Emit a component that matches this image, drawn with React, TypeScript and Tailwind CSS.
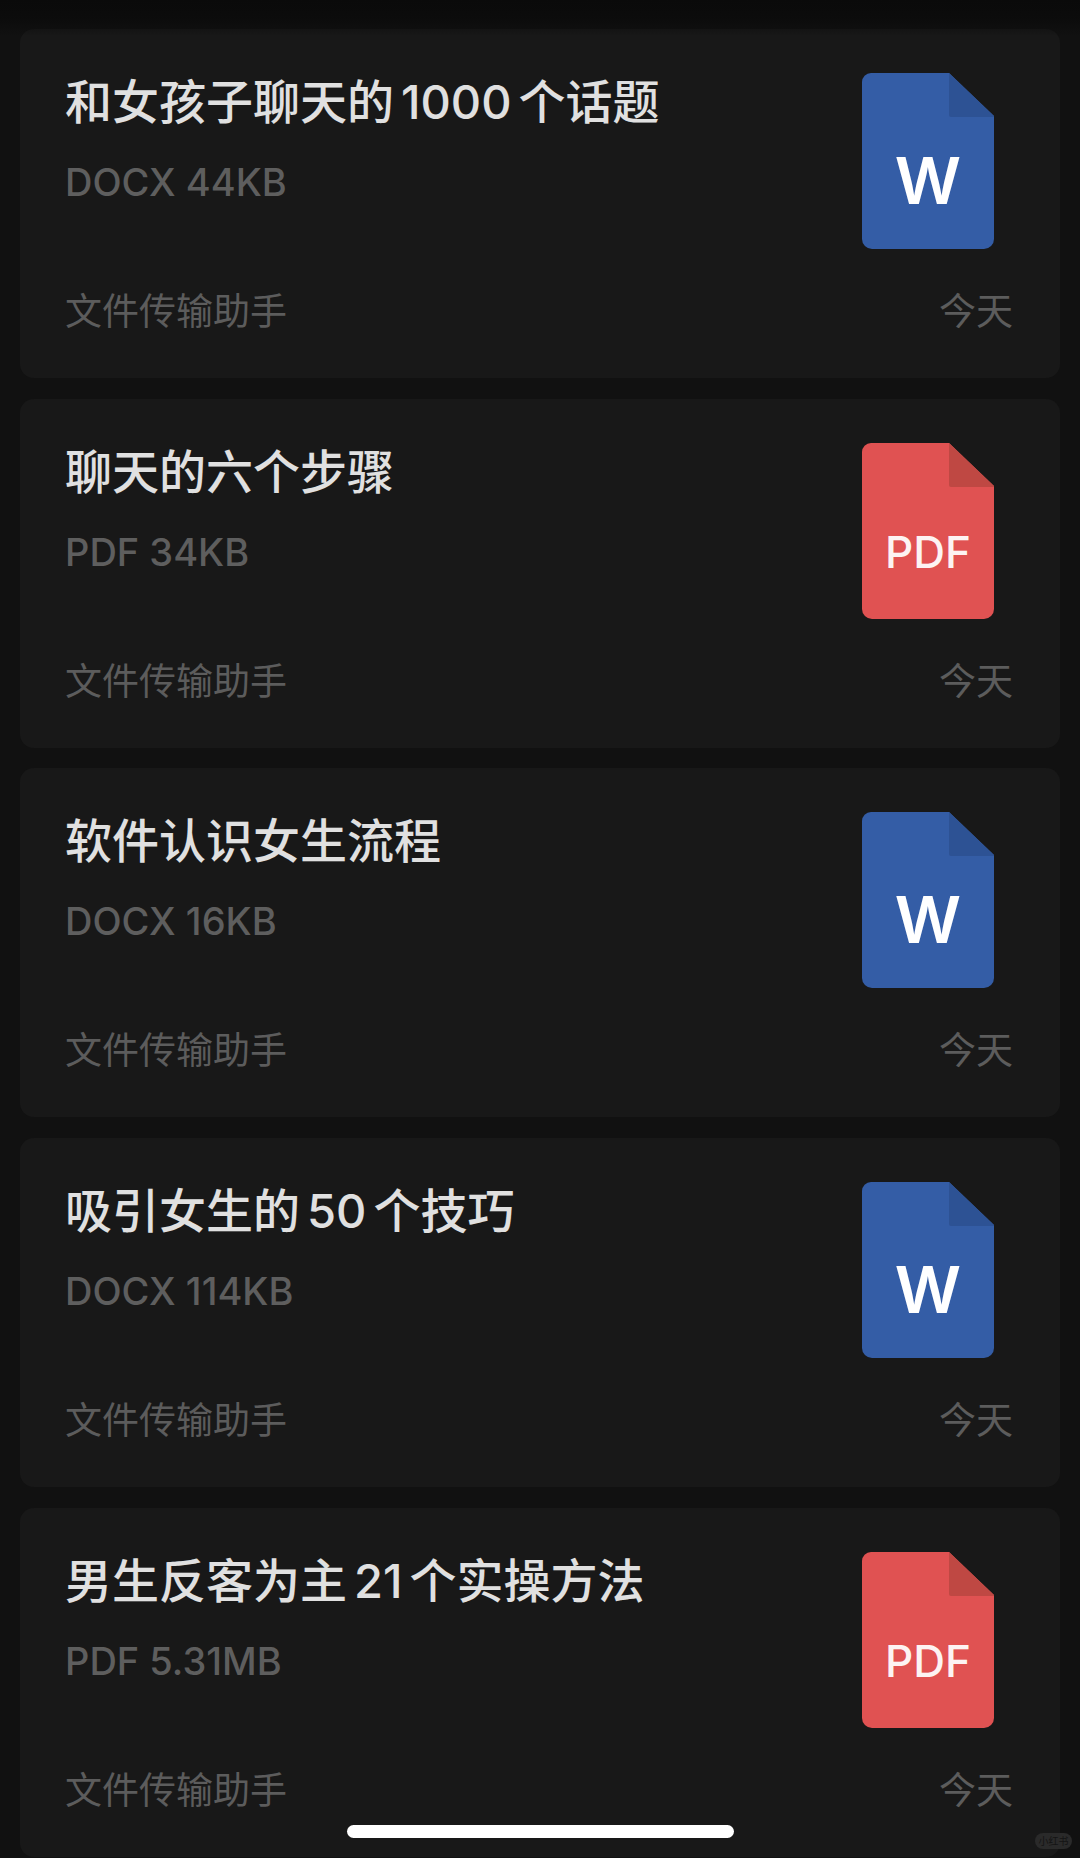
const FONT = 'font-[Inter,"Noto_Sans_CJK_SC",sans-serif]';

type FileItem = {
  title: string;
  meta: string;
  kind: 'word' | 'pdf';
};

const files: FileItem[] = [
  { title: '和女孩子聊天的1000个话题', meta: 'DOCX 44KB', kind: 'word' },
  { title: '聊天的六个步骤', meta: 'PDF 34KB', kind: 'pdf' },
  { title: '软件认识女生流程', meta: 'DOCX 16KB', kind: 'word' },
  { title: '吸引女生的50个技巧', meta: 'DOCX 114KB', kind: 'word' },
  { title: '男生反客为主21个实操方法', meta: 'PDF 5.31MB', kind: 'pdf' },
];

function FileIcon({ kind }: { kind: FileItem['kind'] }) {
  const isWord = kind === 'word';
  return (
    <div className="relative h-[176px] w-[132px] shrink-0">
      <svg width="132" height="176" viewBox="0 0 132 176">
        <path
          d="M9 0H87L132 43V166A10 10 0 0 1 122 176H10A10 10 0 0 1 0 166V9A9 9 0 0 1 9 0Z"
          fill={isWord ? '#345da6' : '#e05252'}
        />
        <path d="M87 0L132 43V44H89A2 2 0 0 1 87 42Z" fill={isWord ? '#2d5294' : '#bf4843'} />
      </svg>
      {isWord ? (
        <span className="absolute inset-x-0 top-[72px] text-center text-[65px] leading-[72px] font-semibold text-white">
          W
        </span>
      ) : (
        <span className="absolute inset-x-0 top-[84px] text-center text-[44px] leading-[50px] font-medium text-[#fdf3f3]">
          PDF
        </span>
      )}
    </div>
  );
}

function FileCard({ file }: { file: FileItem }) {
  // digits in the title sit a little apart from the hanzi around them
  const parts = file.title.split(/(\d+)/);
  return (
    <div className="flex h-[349px] shrink-0 flex-col rounded-[14px] bg-[#181818] pt-[44px] pr-[47px] pb-[46px] pl-[45px]">
      <div className="flex justify-between pr-[19px]">
        <div>
          <div className="text-[47px] leading-[58px] font-medium text-[#e0e0e0]">
            {parts.map((part, i) =>
              /\d/.test(part) ? (
                <span key={i} className="mx-[7px]">
                  {part}
                </span>
              ) : (
                <span key={i}>{part}</span>
              ),
            )}
          </div>
          <div className="mt-[29px] text-[38px] leading-[44px] font-medium text-[#5e5e5e]">{file.meta}</div>
        </div>
        <FileIcon kind={file.kind} />
      </div>
      <div className="mt-auto flex justify-between text-[37px] leading-[40px] text-[#5c5c5c]">
        <span>文件传输助手</span>
        <span>今天</span>
      </div>
    </div>
  );
}

export default function App() {
  return (
    <div
      className={`relative flex h-[1858px] w-[1080px] flex-col gap-[20.7px] overflow-hidden bg-[#111111] px-[20px] pt-[29px] ${FONT}`}
    >
      {files.map((file) => (
        <FileCard key={file.title} file={file} />
      ))}
      {/* dark fade under the status bar */}
      <div className="absolute inset-x-0 top-0 h-[36px] bg-linear-to-b from-[#0a0a0a] via-[#0a0a0a]/80 to-transparent" />
      {/* home indicator */}
      <div className="absolute top-[1825px] left-[347px] h-[13px] w-[387px] rounded-full bg-white" />
      <div className="absolute top-[1833px] left-[1035px] flex h-[16px] w-[37px] items-center justify-center rounded-full bg-[#2a2a2a] text-[10px] leading-none text-[#141414]">
        小红书
      </div>
    </div>
  );
}
